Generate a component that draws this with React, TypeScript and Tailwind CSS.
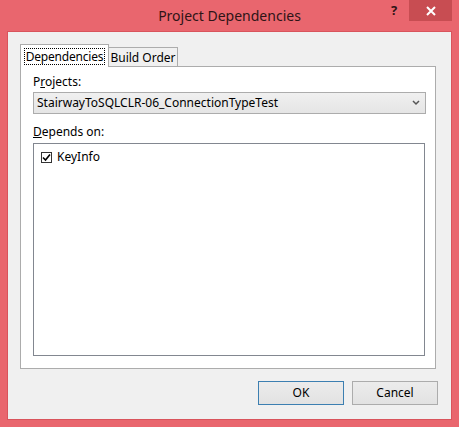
import React from "react";

export default function App() {
  const font = { fontFamily: '"Segoe UI", "Noto Sans", "Open Sans", sans-serif' };
  return (
    <div
      className="w-[459px] h-[427px] bg-[#e9666e] flex flex-col text-[12px] text-black"
      style={font}
    >
      {/* title bar */}
      <div className="h-[31px] relative flex items-start justify-center shrink-0">
        <div className="mt-[6px] text-[14px] text-[#2e1416] leading-[20px]">Project Dependencies</div>
        <div className="absolute right-[7px] top-0 flex items-start">
          <div className="w-[30px] h-[21px] flex items-center justify-center text-[13px] font-bold text-[#2e1416]">?</div>
          <div className="w-[43px] h-[21px] bg-[#c84d52] flex items-center justify-center">
            <svg width="10" height="10" viewBox="0 0 10 10">
              <path d="M1 1 L9 9 M9 1 L1 9" stroke="#ffffff" strokeWidth="2" />
            </svg>
          </div>
        </div>
      </div>
      {/* client area */}
      <div className="ml-[7px] w-[445px] h-[389px] bg-[#f0f0f0] border border-[#d9545c] flex flex-col">
        {/* tabs */}
        <div className="ml-[12px] mt-[12px] flex items-end h-[22px] relative z-10">
          <div className="w-[89px] h-[23px] bg-white border border-[#acacac] border-b-0 flex items-center justify-center -mb-[1px]">
            <span className="border border-dotted border-black px-[1px] leading-[15px] tracking-[-0.2px]">Dependencies</span>
          </div>
          <div className="w-[69px] h-[19px] bg-[#f0f0f0] border border-[#acacac] border-l-0 border-b-0 flex items-center justify-center leading-[15px]">
            Build Order
          </div>
        </div>
        {/* panel */}
        <div className="ml-[12px] w-[416px] h-[303px] bg-white border border-[#acacac] flex flex-col pl-[12px] pr-[9px]">
          <div className="mt-[7px] leading-[16px]">
            P<span className="underline">r</span>ojects:
          </div>
          <div className="mt-[2px] h-[22px] w-[393px] border border-[#acacac] bg-gradient-to-b from-[#f0f0f0] to-[#e5e5e5] flex items-center justify-between pl-[3px] pr-[5px]">
            <span>StairwayToSQLCLR-06_ConnectionTypeTest</span>
            <svg width="8" height="6" viewBox="0 0 8 6">
              <path d="M1 1 L4 4 L7 1" stroke="#555" strokeWidth="1.5" fill="none" />
            </svg>
          </div>
          <div className="mt-[10px] leading-[16px]">
            <span className="underline">D</span>epends on:
          </div>
          <div className="mt-[3px] w-[392px] h-[213px] border border-[#828790] bg-white px-[7px] pt-[5px]">
            <div className="flex items-center gap-[5px] leading-[16px]">
              <div className="w-[11px] h-[11px] border border-[#333] flex items-center justify-center bg-white">
                <svg width="9" height="9" viewBox="0 0 9 9">
                  <path d="M1 4.5 L3.5 7 L8 1.5" stroke="#000" strokeWidth="1.6" fill="none" />
                </svg>
              </div>
              <span>KeyInfo</span>
            </div>
          </div>
        </div>
        {/* buttons */}
        <div className="flex justify-end gap-[8px] mt-[12px] mr-[13px]">
          <button className="w-[86px] h-[24px] border border-[#3c7fb1] bg-gradient-to-b from-[#ececec] to-[#e2e2e2] text-[12px]">
            OK
          </button>
          <button className="w-[86px] h-[24px] border border-[#acacac] bg-gradient-to-b from-[#ececec] to-[#e2e2e2] text-[12px]">
            Cancel
          </button>
        </div>
      </div>
    </div>
  );
}
